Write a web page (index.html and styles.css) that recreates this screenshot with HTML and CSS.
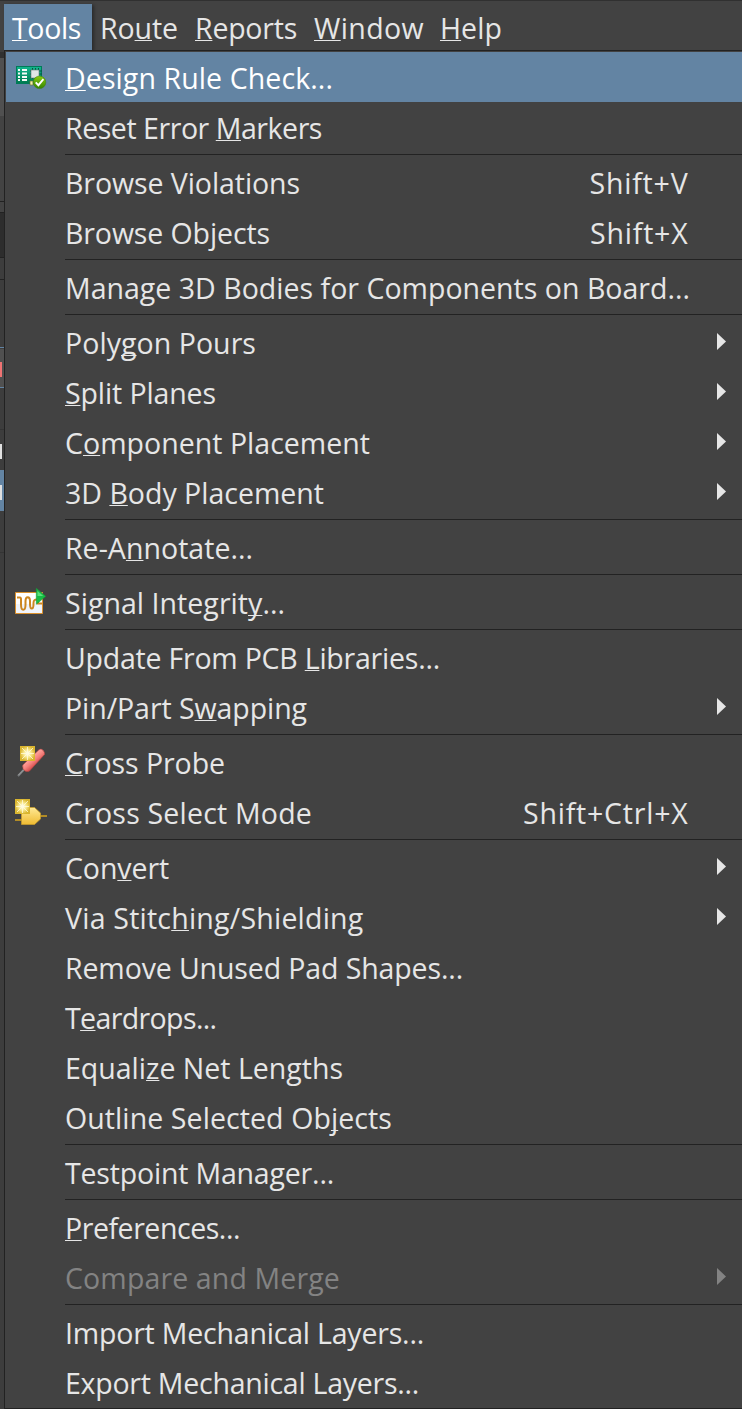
FILE: index.html
```html
<!DOCTYPE html>
<html lang="en">
<head>
<meta charset="utf-8">
<title>Tools menu</title>
<link rel="stylesheet" href="styles.css">
</head>
<body>
<nav class="menubar">
  <div class="tab tab-tools active"><span class="fit" data-w="69"><u>T</u>ools</span></div>
  <div class="tab tab-route"><span class="fit" data-w="78">Ro<u>u</u>te</span></div>
  <div class="tab tab-reports"><span class="fit" data-w="102"><u>R</u>eports</span></div>
  <div class="tab tab-window"><span class="fit" data-w="110"><u>W</u>indow</span></div>
  <div class="tab tab-help"><span class="fit" data-w="62"><u>H</u>elp</span></div>
</nav>
<div class="body">
<svg class="edge" width="4" height="1359" viewBox="0 50 4 1359" shape-rendering="crispEdges">
  <path fill="#3d3d3d" d="M0 50h4v1359H0z"/>
  <path fill="#303030" d="M0 52h4v6H0z"/>
  <path fill="#505050" d="M0 58h4v58H0z"/>
  <path fill="#434343" d="M0 116h4v96H0z"/>
  <path fill="#222" d="M0 201h4v1H0zM0 212h4v1H0zM0 257h4v1H0zM0 279h4v1H0z"/>
  <path fill="#2d2d2d" d="M0 213h4v44H0z"/>
  <path fill="#505050" d="M0 349h4v38H0z"/>
  <path fill="#6384a3" d="M0 347h4v1H0zM0 387h4v1H0zM0 470h4v41H0z"/>
  <path fill="#f07373" d="M0 362h2v15H0z"/>
  <path fill="#e0e0e0" d="M0 444h2v15H0zM0 485h2v15H0z"/>
  <path fill="#343434" d="M0 429h4v1H0zM0 552h4v1H0z"/>
</svg>
<main class="menu">
  <div class="row active">
    <svg class="icon" viewBox="0 0 36 32">
      <defs>
        <linearGradient id="pcb" x2="0" y2="1"><stop stop-color="#12b58d"/><stop offset="1" stop-color="#007a50"/></linearGradient>
        <linearGradient id="ok" x2="0" y2="1"><stop stop-color="#8acb10"/><stop offset="1" stop-color="#338500"/></linearGradient>
      </defs>
      <path fill="#007b58" d="M4 5h26v18H4z"/><path fill="url(#pcb)" d="M5 6h24v16H5z"/>
      <path stroke="#075442" d="M18 10h12M18 13h12M18 16h12M20.500 7v11M23.500 7v11M26.500 7v11"/>
      <path fill="#f4faf7" d="M6 8h2v2H6zM6 11.500h2v2H6zM6 15h2v2H6zM6 18h2v2H6zM10 8h5v2h-5zM10 11.500h5v2h-5zM10 15h5v2h-5zM10 18h5v2h-5z"/>
      <path fill="#e1e6e7" stroke="#667d7a" stroke-width=".6" d="M19 9h8v8h-8z"/>
      <path fill="#f5edaa" stroke="#6c792b" stroke-width=".7" d="M18 20h3v4h-3z"/>
      <circle cx="27.500" cy="21.300" r="6.300" fill="url(#ok)" stroke="#3c7a10" stroke-width=".5"/>
      <path fill="none" stroke="#fff" stroke-width="1.900" d="m23.700 21.300 2.700 2.900 5-6"/>
    </svg>
    <span class="fit" data-w="268"><u>D</u>esign Rule Check...</span></div>
  <div class="row"><span class="fit" data-w="257">Reset Error <u>M</u>arkers</span></div>
  <hr>
  <div class="row"><span class="fit" data-w="235">Browse Violations</span><span class="key fit" data-w="99">Shift+V</span></div>
  <div class="row"><span class="fit" data-w="205">Browse Objects</span><span class="key fit" data-w="98.5">Shift+X</span></div>
  <hr>
  <div class="row"><span class="fit" data-w="625">Manage 3D Bodies for Components on Board...</span></div>
  <hr>
  <div class="row sub"><span class="fit" data-w="191">Poly<u>g</u>on Pours</span></div>
  <div class="row sub"><span class="fit" data-w="151"><u>S</u>plit Planes</span></div>
  <div class="row sub"><span class="fit" data-w="305">C<u>o</u>mponent Placement</span></div>
  <div class="row sub"><span class="fit" data-w="259">3D <u>B</u>ody Placement</span></div>
  <hr>
  <div class="row"><span class="fit" data-w="188">Re-A<u>n</u>notate...</span></div>
  <hr>
  <div class="row">
    <svg class="icon" viewBox="0 0 36 32">
      <path fill="#fff" stroke="#db912c" d="M3.500 6.500h27v21h-27z"/>
      <path fill="#f0f4fb" d="M4 18h26v9H4z"/>
      <path fill="none" stroke="#cc8621" stroke-width="2" d="M5 11.500h2.500c2 0 1.500 1 1.500 7 0 7 4.500 7 4.500 0v-3.500c0-5 4.500-5 4.500 0v3c0 6 3.500 6 3.500 0V17c0-3 1.500-4 4.500-3.500v4h4"/>
      <path fill="#18bd45" stroke="#169534" stroke-width=".6" d="m24.300 2.300 9.400 8-9.400 8z"/>
      <path fill="#5ce07c" d="m25.500 5 5.700 5h-5.700z"/>
    </svg>
    <span class="fit" data-w="220">Signal Integrit<u>y</u>...</span></div>
  <hr>
  <div class="row"><span class="fit" data-w="375">Update From PCB <u>L</u>ibraries...</span></div>
  <div class="row sub"><span class="fit" data-w="242">Pin/Part S<u>w</u>apping</span></div>
  <hr>
  <div class="row">
    <svg class="icon" viewBox="0 0 36 32">
      <defs>
        <radialGradient id="star"><stop stop-color="#fff"/><stop offset=".5" stop-color="#f9e98e"/><stop offset="1" stop-color="#d9b52f"/></radialGradient>
        <linearGradient id="red" gradientUnits="userSpaceOnUse" x1="18" y1="11" x2="25" y2="19"><stop stop-color="#ffaaa2"/><stop offset=".5" stop-color="#f5827d"/><stop offset="1" stop-color="#d04545"/></linearGradient>
      </defs>
      <path stroke="#777b7d" stroke-width="2" d="m6 30 6.500-7"/><path stroke="#aaa" stroke-width=".8" d="m6.500 29 5-5"/>
      <path fill="url(#red)" stroke="#b84441" stroke-width=".6" d="M10.800 19 27 3.700q2-1.500 4 .5t1.500 4.300L17.500 25q-2 1-4.500 0-3-2-2.200-6z"/>
      <path fill="url(#star)" d="M8 0h15v15H8z"/><path stroke="#fffbdc" stroke-width=".8" d="M15.500 1v13M9 7.500h13M10 2l11 11M21 2 10 13"/>
    </svg>
    <span class="fit" data-w="160"><u>C</u>ross Probe</span></div>
  <div class="row">
    <svg class="icon" viewBox="0 0 36 32">
      <defs><linearGradient id="gate" x2="0" y2="1"><stop stop-color="#ffe994"/><stop offset="1" stop-color="#efbb32"/></linearGradient></defs>
      <path stroke="#b18b26" stroke-width="2" d="M3 24h7M28 20h7"/>
      <path fill="url(#gate)" stroke="#c79c2b" stroke-width=".8" d="M9.500 11.500h13l6 5.500v6l-6 5.500h-13z"/>
      <path fill="url(#star)" d="M3 3h15v15H3z"/><path stroke="#fffbdc" stroke-width=".8" d="M10.500 4v13M4 10.500h13M5 5l11 11M16 5 5 16"/>
    </svg>
    <span class="fit" data-w="247">Cross Select Mode</span><span class="key fit" data-w="165.5">Shift+Ctrl+X</span></div>
  <hr>
  <div class="row sub"><span class="fit" data-w="104">Con<u>v</u>ert</span></div>
  <div class="row sub"><span class="fit" data-w="298.5">Via Stitc<u>h</u>ing/Shielding</span></div>
  <div class="row"><span class="fit" data-w="398">Remove Unused Pad Shapes...</span></div>
  <div class="row"><span class="fit" data-w="151.5">T<u>e</u>ardrops...</span></div>
  <div class="row"><span class="fit" data-w="278">Equali<u>z</u>e Net Lengths</span></div>
  <div class="row"><span class="fit" data-w="327">Outline Selected Ob<u>j</u>ects</span></div>
  <hr>
  <div class="row"><span class="fit" data-w="269">Testpoint Manager...</span></div>
  <hr>
  <div class="row"><span class="fit" data-w="175"><u>P</u>references...</span></div>
  <div class="row sub disabled"><span class="fit" data-w="275">Compare and Merge</span></div>
  <hr>
  <div class="row"><span class="fit" data-w="359">Import Mechanical Layers...</span></div>
  <div class="row"><span class="fit" data-w="354">Export Mechanical Layers...</span></div>
</main>
</div>
<script src="fit.js"></script>
</body>
</html>
```
FILE: styles.css
```css
* { box-sizing: border-box; }
body {
  margin: 0;
  width: 742px;
  height: 1409px;
  overflow: hidden;
  background: #424242;
  color: #e6e6e6;
  font: 28.5px/48px "Open Sans", "Noto Sans", sans-serif;
  font-kerning: normal;
}
u {
  text-decoration: underline 1px;
  text-underline-offset: 1px;
  text-decoration-skip-ink: none;
}
.menubar {
  display: flex;
  height: 50px;
  padding: 3px 0 0 4px;
  border-top: 1px solid #303030;
}
.tab {
  height: 47px;
  padding-left: 8px;
  white-space: nowrap;
}
.tab-tools { width: 88px; }
.tab-route { width: 95px; }
.tab-reports { width: 119px; }
.tab-window { width: 126px; }
.active { background: #6384a3; color: #fff; }
.tab.active { box-shadow: 2px 1px 3px #2b2b2b; }
.body { display: flex; }
.edge { display: block; flex: none; }
.menu {
  position: relative;
  flex: 1;
  min-width: 0;
  height: 1359px;
  padding-top: 1px;
  border: solid #222;
  border-width: 1px 0 1px 1px;
  background: #424242;
}
.row {
  display: flex;
  height: 50px;
  margin-left: 1px;
  padding: 2px 53.5px 0 59px;
  white-space: nowrap;
}
.icon { width: 36px; height: 32px; margin: 7px 17px 0 -53px; flex: none; }
.fit { flex: none; }
.key { margin-left: auto; }
.row.sub { padding-right: 16px; }
.sub::after {
  content: "";
  width: 9px;
  height: 17px;
  margin: 14px 0 0 auto;
  background: currentColor;
  clip-path: polygon(0 0, 100% 50%, 0 100%);
}
.disabled { color: #838383; }
hr {
  height: 1px;
  margin: 2px 0 2px 60px;
  border: 0;
  background: #222;
}
```
FILE: fit.js
```js
document.querySelectorAll('.fit').forEach(function (el) {
  var target = Number(el.dataset.w);
  var natural = el.getBoundingClientRect().width;
  el.style.letterSpacing = (target - natural) / el.textContent.length + 'px';
});
```
